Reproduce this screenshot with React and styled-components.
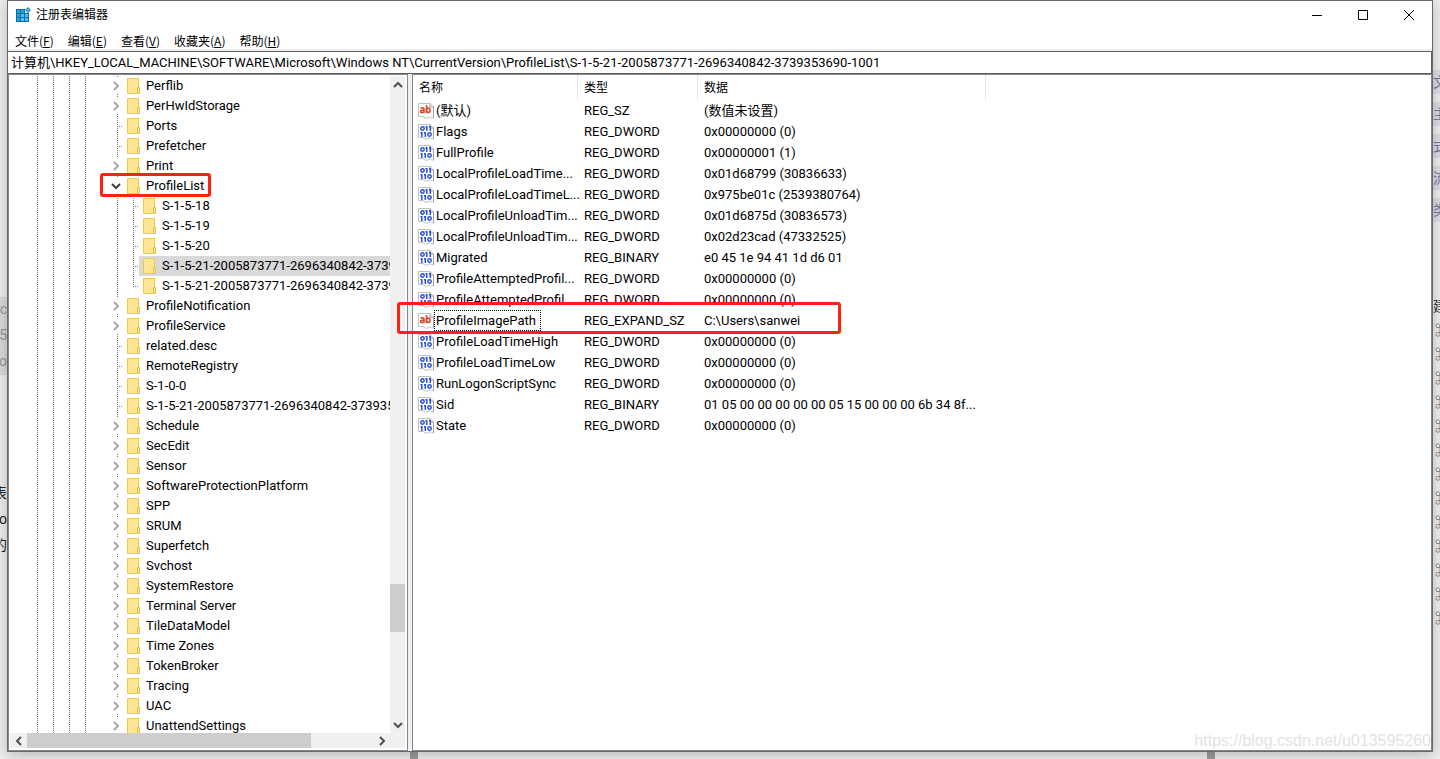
import React from 'react'
import styled, { createGlobalStyle, css } from 'styled-components'

const GlobalStyle = createGlobalStyle`
  * {
    box-sizing: border-box;
  }
  body {
    margin: 0;
    font-family: Roboto, "Noto Sans CJK SC", sans-serif;
    font-size: 13px;
    line-height: 20px;
    color: #000;
  }
  button, input {
    font: inherit;
    color: inherit;
    border: 0;
    padding: 0;
    background: none;
  }
`;

const Desktop = styled.div`
  display: grid;
  grid-template-columns: 7px minmax(0, 1fr) 7px;
  grid-template-rows: minmax(0, 1fr) 7px;
  height: 100vh;
  overflow: hidden;
  background: #efefef;
`;

const Strip = styled.div`
  display: flex;
  flex-direction: column;
  overflow: hidden;
  white-space: nowrap;
  padding-top: ${props => (props.$right ? '62px' : '27px')};
`;

const StripText = styled.span`
  flex: none;
  display: flex;
  justify-content: ${props => (props.$end ? 'flex-end' : 'flex-start')};
  height: ${props => props.$h || 24}px;
  line-height: 24px;
  margin-top: ${props => props.$gap || 0}px;
  padding-left: ${props => props.$indent || 0}px;
  font-size: 14px;
  color: ${props => props.$color || '#555'};
  background: ${props => props.$bg || 'transparent'};
`;

const Footer = styled.div`
  grid-column: 1 / -1;
  display: flex;
  justify-content: space-between;
  padding: 0 225px 0 410px;
`;

const FooterMark = styled.span`
  width: 8px;
  background: #9c9c9c;
`;

const Window = styled.main`
  position: relative;
  display: flex;
  flex-direction: column;
  min-width: 0;
  border: 1px solid #6a6a6c;
  background: #fff;
  box-shadow: 0 2px 14px rgba(0, 0, 0, 0.25);
`;

const TitleBar = styled.header`
  display: flex;
  align-items: center;
  height: 28px;
  padding-left: 7px;
`;

const Title = styled.h1`
  flex: 1;
  margin: 0 0 0 5px;
  font-size: 12px;
  font-weight: 400;
  line-height: 22px;
`;

const WindowButton = styled.button`
  display: flex;
  align-items: center;
  justify-content: center;
  width: 46px;
  height: 28px;
`;

const MenuBar = styled.nav`
  display: flex;
  gap: 14px;
  height: 22px;
  padding: 4px 0 0 7px;
  border-bottom: 2px solid #f0f0f0;
  font-family: "Noto Sans CJK SC", sans-serif;
`;

const MenuButton = styled.button`
  height: 16px;
  line-height: 16px;
  font-size: 12px;
`;

const Address = styled.input`
  width: 100%;
  height: 23px;
  padding: 0 3px 2px 3px;
  border: 1px solid #5f5f62;
  border-left-width: 0;
  outline: 0;
`;

const Panes = styled.div`
  position: relative;
  display: grid;
  grid-template-columns: 400px minmax(0, 1fr);
  column-gap: 4px;
  flex: 1;
  min-height: 0;
  background: #f0f0f0;
`;

const Pane = styled.section`
  min-width: 0;
  min-height: 0;
  overflow: hidden;
  border: 1px solid #828790;
  background: #fff;
`;

const TreePane = styled(Pane)`
  display: grid;
  grid-template-columns: minmax(0, 1fr) 15px;
  grid-template-rows: minmax(0, 1fr) 15px;
  padding: 1px 2px 2px 1px;
`;

const Tree = styled.ul`
  margin: 0;
  padding: 0 0 0 19px;
  list-style: none;
  overflow: hidden;
`;

const TreeRow = styled.li`
  display: flex;
  height: 20px;
`;

const dotsDown = 'repeating-linear-gradient(to bottom, #777 0 1px, transparent 1px 2px)';
const dotsAcross = 'repeating-linear-gradient(to right, #777 0 1px, transparent 1px 2px)';

const Guide = styled.span`
  flex: none;
  width: 16px;
  ${props => props.$line && css`
    background: ${dotsDown} 8px 0 / 1px 100% no-repeat;
  `}
`;

const Joint = styled.span`
  flex: none;
  width: 14px;
  background:
    ${dotsDown} 8px 0 / 1px ${props => (props.$last ? '11px' : '100%')} no-repeat,
    ${dotsAcross} 8px 10px / 6px 1px no-repeat;
`;

const Toggle = styled.button`
  flex: none;
  width: 14px;
  height: 20px;
  padding-left: 1px;
  background:
    ${dotsDown} 8px 0 / 1px 2px no-repeat,
    ${dotsDown} 8px 18px / 1px 2px no-repeat;

  svg {
    display: block;
  }
`;

const Label = styled.span`
  display: flex;
  flex: ${props => (props.$selected ? 1 : 'none')};
  align-items: center;
  gap: 5px;
  padding-left: 2px;
  white-space: nowrap;
  background: ${props => (props.$selected ? '#d9d9d9' : 'transparent')};

  svg {
    flex: none;
  }
`;

const ScrollBar = styled.div`
  display: flex;
  flex-direction: ${props => (props.$vertical ? 'column' : 'row')};
  grid-row: ${props => (props.$vertical ? '1' : '2')};
  grid-column: ${props => (props.$vertical ? '2' : '1')};
  background: #f0f0f0;
`;

const ScrollButton = styled.button`
  flex: 0 0 17px;
  display: flex;
  align-items: center;
  justify-content: center;
  min-width: 15px;
`;

const Track = styled.span`
  flex: ${props => props.$size};
`;

const Thumb = styled.span`
  flex: ${props => props.$size};
  background: #cdcdcd;
`;

const Corner = styled.div`
  background: #f0f0f0;
`;

const Values = styled.table`
  width: 573px;
  table-layout: fixed;
  border-collapse: separate;
  border-spacing: 0;
`;

const Head = styled.th`
  width: ${props => props.$width}px;
  height: 25px;
  padding: 0 6px;
  border-right: 1px solid #e5e5e5;
  font-size: 12px;
  font-weight: 400;
  text-align: left;
`;

const Cell = styled.td`
  height: 21px;
  padding: 0 0 0 6px;
  line-height: 21px;
  white-space: nowrap;
`;

const NameCell = styled.td`
  height: 21px;
  padding: 0 0 0 5px;
`;

const Name = styled.div`
  display: flex;
  align-items: center;
  height: 21px;

  svg {
    flex: none;
  }
`;

const NameText = styled.span`
  padding: 0 4px 0 1px;
  border: 1px dotted ${props => (props.$focused ? '#000' : 'transparent')};
  line-height: 19px;
  white-space: nowrap;
`;

const Mark = styled.span`
  position: absolute;
  left: ${props => props.$x}px;
  top: ${props => props.$y}px;
  width: ${props => props.$w}px;
  height: ${props => props.$h}px;
  border: 3px solid #ff2213;
  border-radius: 3px;
  pointer-events: none;
`;

const Watermark = styled.span`
  position: absolute;
  right: 1px;
  bottom: 0;
  color: #e2e2e2;
  font-family: "Liberation Sans", sans-serif;
  font-size: 16px;
`;

function AppIcon() {
  return (
    <svg width="16" height="16" viewBox="0 0 16 16" aria-hidden="true">
      <path d="M1 2h9v4h4v9H1z" fill="#0c6ea0" />
      <path d="M2 3h3v3H2zM6 3h3v3H6zM2 7h3v3H2zM2 11h3v3H2z" fill="#27a5df" />
      <path d="M6 7h3v3H6zM10 7h3v3h-3zM6 11h3v3H6zM10 11h3v3h-3z" fill="#4cc4f3" />
      <path d="M13 0l3 3-3 3-3-3z" fill="#2387b5" />
      <path d="M13 1.500L14.500 3 13 4.500 11.500 3z" fill="#5cc8ef" />
    </svg>
  )
}

function Folder() {
  return (
    <svg width="16" height="16" viewBox="0 0 16 16" aria-hidden="true">
      <path d="M2.500 .5h11v15h-11z" fill="#ffe694" stroke="#ecc84e" />
      <path d="M12.500 9.500h2v6h-2z" fill="#ffe694" stroke="#e8c040" />
    </svg>
  )
}

function Chevron({ dir, color = '#505050' }) {
  const paths = {
    right: 'M4 2l4 4-4 4',
    left: 'M8 2L4 6l4 4',
    up: 'M2 8l4-4 4 4',
    down: 'M2 4l4 4 4-4'
  }
  return (
    <svg width="12" height="12" viewBox="0 0 12 12" aria-hidden="true">
      <path d={paths[dir]} fill="none" stroke={color} strokeWidth="2" />
    </svg>
  )
}

function ValueIcon({ text }) {
  return (
    <svg width="16" height="16" viewBox="0 0 16 16" aria-hidden="true">
      <path d="M.5 .5h11.500l3.500 3.500v11h-2l-1.500-1.500-2 1.500H7l-2-1.500H.5z" fill="#fff" stroke="#c0c0c0" />
      <path d="M12 .5V4h3.500v11" fill="none" stroke="#a0a0a0" />
      {text ? (
        <g fill="none" stroke="#d5482a" strokeWidth="1.600">
          <path d="M2.500 5.200q3.500-1 3.500 1V10M6 7.300H4q-1.500 0-1.500 1.200T4 9.600q1.500 0 2-1" />
          <path d="M8.500 2v8" />
          <ellipse cx="10.300" cy="7.300" rx="1.800" ry="2.200" />
        </g>
      ) : (
        <g fill="none" stroke="#2a4fd8" strokeWidth="1.500">
          <ellipse cx="4.500" cy="4.500" rx="1.700" ry="1.700" />
          <path d="M7.500 2.700h1.300V7M11 2.700h1.300V7" />
          <path d="M2.500 8.700h1.300V13M6 8.700h1.300V13" />
          <ellipse cx="11.500" cy="10.500" rx="1.700" ry="1.700" />
        </g>
      )}
    </svg>
  )
}

const menus = [
  ['文件', 'F'],
  ['编辑', 'E'],
  ['查看', 'V'],
  ['收藏夹', 'A'],
  ['帮助', 'H']
]

const nodes = [
  { name: 'Perflib', branch: true },
  { name: 'PerHwIdStorage', branch: true },
  { name: 'Ports' },
  { name: 'Prefetcher' },
  { name: 'Print', branch: true },
  { name: 'ProfileList', branch: true, open: true },
  { name: 'S-1-5-18', child: true },
  { name: 'S-1-5-19', child: true },
  { name: 'S-1-5-20', child: true },
  { name: 'S-1-5-21-2005873771-2696340842-3739353690-1001', child: true, selected: true },
  { name: 'S-1-5-21-2005873771-2696340842-3739353690-1002', child: true, last: true },
  { name: 'ProfileNotification', branch: true },
  { name: 'ProfileService', branch: true },
  { name: 'related.desc' },
  { name: 'RemoteRegistry' },
  { name: 'S-1-0-0' },
  { name: 'S-1-5-21-2005873771-2696340842-3739353690-1001' },
  { name: 'Schedule', branch: true },
  { name: 'SecEdit', branch: true },
  { name: 'Sensor', branch: true },
  { name: 'SoftwareProtectionPlatform', branch: true },
  { name: 'SPP', branch: true },
  { name: 'SRUM', branch: true },
  { name: 'Superfetch', branch: true },
  { name: 'Svchost', branch: true },
  { name: 'SystemRestore', branch: true },
  { name: 'Terminal Server', branch: true },
  { name: 'TileDataModel', branch: true },
  { name: 'Time Zones', branch: true },
  { name: 'TokenBroker', branch: true },
  { name: 'Tracing', branch: true },
  { name: 'UAC', branch: true },
  { name: 'UnattendSettings', branch: true }
]

const values = [
  ['(默认)', 'REG_SZ', '(数值未设置)'],
  ['Flags', 'REG_DWORD', '0x00000000 (0)'],
  ['FullProfile', 'REG_DWORD', '0x00000001 (1)'],
  ['LocalProfileLoadTime...', 'REG_DWORD', '0x01d68799 (30836633)'],
  ['LocalProfileLoadTimeL...', 'REG_DWORD', '0x975be01c (2539380764)'],
  ['LocalProfileUnloadTim...', 'REG_DWORD', '0x01d6875d (30836573)'],
  ['LocalProfileUnloadTim...', 'REG_DWORD', '0x02d23cad (47332525)'],
  ['Migrated', 'REG_BINARY', 'e0 45 1e 94 41 1d d6 01'],
  ['ProfileAttemptedProfil...', 'REG_DWORD', '0x00000000 (0)'],
  ['ProfileAttemptedProfil...', 'REG_DWORD', '0x00000000 (0)'],
  ['ProfileImagePath', 'REG_EXPAND_SZ', 'C:\\Users\\sanwei'],
  ['ProfileLoadTimeHigh', 'REG_DWORD', '0x00000000 (0)'],
  ['ProfileLoadTimeLow', 'REG_DWORD', '0x00000000 (0)'],
  ['RunLogonScriptSync', 'REG_DWORD', '0x00000000 (0)'],
  ['Sid', 'REG_BINARY', '01 05 00 00 00 00 00 05 15 00 00 00 6b 34 8f...'],
  ['State', 'REG_DWORD', '0x00000000 (0)']
]

function TreeNode(props) {
  const node = props.data
  return (
    <TreeRow>
      <Guide $line />
      <Guide $line />
      <Guide $line />
      <Guide $line />
      <Guide />
      {node.child && <Guide $line />}
      {node.branch ? (
        <Toggle aria-label={node.name} aria-expanded={!!node.open}>
          <Chevron dir={node.open ? 'down' : 'right'} color={node.open ? '#404040' : '#a6a6a6'} />
        </Toggle>
      ) : (
        <Joint $last={node.last} />
      )}
      <Label $selected={node.selected}>
        <Folder />
        <span>{node.name}</span>
      </Label>
    </TreeRow>
  )
}

function ValueTable() {
  return (
    <Values>
      <thead>
        <tr>
          <Head $width={165}>名称</Head>
          <Head $width={120}>类型</Head>
          <Head $width={288}>数据</Head>
        </tr>
      </thead>
      <tbody>
        {values.map(([name, type, data], index) => (
          <tr key={index}>
            <NameCell>
              <Name>
                <ValueIcon text={type.endsWith('SZ')} />
                <NameText $focused={name === 'ProfileImagePath'}>{name}</NameText>
              </Name>
            </NameCell>
            <Cell>{type}</Cell>
            <Cell>{data}</Cell>
          </tr>
        ))}
      </tbody>
    </Values>
  )
}

const App = () => (
  <Desktop>
    <GlobalStyle />
    <Strip>
      <StripText $end $gap={270} $h={26} $bg="#dcdcdc" $color="#999">.c</StripText>
      <StripText $end $h={26} $bg="#dcdcdc" $color="#999">5</StripText>
      <StripText $end $h={26} $bg="#dcdcdc" $color="#999">o</StripText>
      <StripText $end $gap={106} $color="#222">表</StripText>
      <StripText $end $gap={2} $color="#222">lo</StripText>
      <StripText $end $gap={2} $color="#222">的</StripText>
    </Strip>
    <Window>
      <TitleBar>
        <AppIcon />
        <Title>注册表编辑器</Title>
        <WindowButton aria-label="最小化">
          <svg width="10" height="10"><path d="M0 5.500h10" stroke="#000" /></svg>
        </WindowButton>
        <WindowButton aria-label="最大化">
          <svg width="10" height="10"><path d="M.5 .5h9v9h-9z" fill="none" stroke="#000" /></svg>
        </WindowButton>
        <WindowButton aria-label="关闭">
          <svg width="10" height="10"><path d="M0 0l10 10M10 0L0 10" stroke="#000" /></svg>
        </WindowButton>
      </TitleBar>
      <MenuBar>
        {menus.map(([text, key]) => (
          <MenuButton key={key}>{text}(<u>{key}</u>)</MenuButton>
        ))}
      </MenuBar>
      <Address
        aria-label="地址"
        defaultValue="计算机\HKEY_LOCAL_MACHINE\SOFTWARE\Microsoft\Windows NT\CurrentVersion\ProfileList\S-1-5-21-2005873771-2696340842-3739353690-1001"
      />
      <Panes>
        <TreePane>
          <Tree>
            {nodes.map((node, index) => <TreeNode key={index} data={node} />)}
          </Tree>
          <ScrollBar $vertical>
            <ScrollButton aria-label="向上"><Chevron dir="up" /></ScrollButton>
            <Track $size={491} />
            <Thumb $size={48} />
            <Track $size={84} />
            <ScrollButton aria-label="向下"><Chevron dir="down" /></ScrollButton>
          </ScrollBar>
          <ScrollBar>
            <ScrollButton aria-label="向左"><Chevron dir="left" /></ScrollButton>
            <Thumb $size={283} />
            <Track $size={62} />
            <ScrollButton aria-label="向右"><Chevron dir="right" /></ScrollButton>
          </ScrollBar>
          <Corner />
        </TreePane>
        <Pane>
          <ValueTable />
        </Pane>
        <Mark $x={92} $y={99} $w={111} $h={24} />
        <Mark $x={389} $y={228} $w={444} $h={32} />
      </Panes>
      <Watermark>https://blog.csdn.net/u013595260</Watermark>
    </Window>
    <Strip $right>
      {['文', '主', '式', '流', '类'].map(text => (
        <StripText key={text} $gap={8} $color="#77779a" $bg="#dcdfe8">{text}</StripText>
      ))}
      <StripText $gap={72} $color="#333">建</StripText>
      {Array.from({ length: 13 }, (_, index) => (
        <StripText key={index} $indent={2}>⌘</StripText>
      ))}
    </Strip>
    <Footer>
      <FooterMark />
      <FooterMark />
    </Footer>
  </Desktop>
)

export default App
